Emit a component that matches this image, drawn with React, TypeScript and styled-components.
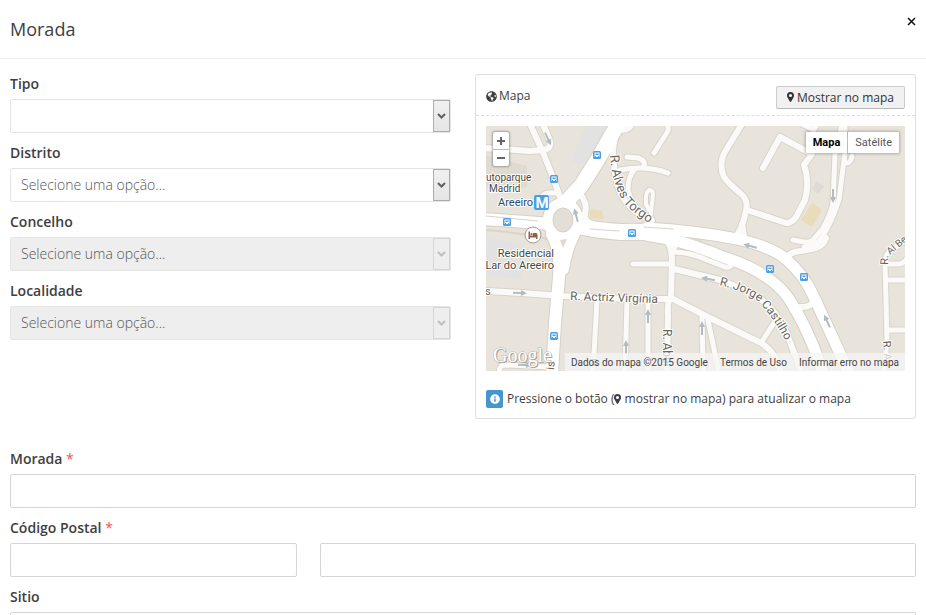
import React from "react";
import styled, { createGlobalStyle } from "styled-components";
import { FaInfoCircle, FaGlobeAmericas } from "react-icons/fa";

const GlobalStyle = createGlobalStyle`
  * { box-sizing: border-box; }
  body { margin: 0; background: #fff; color: #3e3e3e; font: 14px/20px "Open Sans", sans-serif; }
  input, select, button { font-family: inherit; }
`;

const Dialog = styled.main`
  height: 100vh;
  overflow-y: auto;
  scrollbar-width: none;
`;

const Header = styled.header`
  display: flex;
  justify-content: space-between;
  align-items: flex-start;
  padding: 14px 9px 14px 10px;
  border-bottom: 1px solid #eee;
`;

const Title = styled.h1`
  margin: 0;
  font-size: 18px;
  line-height: 30px;
  font-weight: 400;
`;

const CloseButton = styled.button`
  display: flex;
  margin: 2px 0 0;
  padding: 1px;
  border: 0;
  background: none;
  color: #111;
  cursor: pointer;
`;

const Form = styled.form`
  padding: 15px 10px 20px;
`;

const Columns = styled.div`
  display: grid;
  grid-template-columns: 1fr 1fr;
  align-items: start;
  gap: 24px;
  margin-bottom: 30px;
`;

const Field = styled.div`
  margin-bottom: 10px;
`;

const Label = styled.label`
  display: block;
  margin-bottom: 5px;
  font-weight: 600;
`;

const Required = styled.span`
  color: #f0524f;
  font-weight: 400;
`;

const TextBox = styled.input`
  display: block;
  width: 100%;
  height: 34px;
  padding: 0 10px;
  border: 1px solid #d5d5d5;
  border-radius: 2px;
  font-size: 14px;
  color: #555;
`;

const PostalRow = styled.div`
  display: grid;
  grid-template-columns: 13fr 27fr;
  gap: 23px;
`;

const SelectWrap = styled.div`
  position: relative;
`;

const Select = styled.select`
  display: block;
  width: 100%;
  height: 34px;
  padding: 0 28px 2px 10px;
  border: 1px solid #e5e5e5;
  border-radius: 2px;
  appearance: none;
  background: #fff;
  color: #555;
  font-size: 14px;
  font-weight: 300;
  opacity: 1;
  &:disabled { background: #eee; }
`;

const Arrow = styled.span<{ $disabled?: boolean }>`
  position: absolute;
  top: 1px;
  right: 1px;
  bottom: 1px;
  width: 17px;
  display: flex;
  align-items: center;
  justify-content: center;
  pointer-events: none;
  border: 1px solid ${(p) => (p.$disabled ? "#d6d6d6" : "#acacac")};
  background: ${(p) => (p.$disabled ? "#eee" : "linear-gradient(#f0f0f0, #e5e5e5)")};
  color: ${(p) => (p.$disabled ? "#bfbfbf" : "#606060")};
`;

const Panel = styled.section`
  border: 1px solid #ddd;
  border-radius: 3px;
  font-size: 12px;
`;

const PanelHeader = styled.div`
  display: flex;
  align-items: center;
  justify-content: space-between;
  height: 41px;
  padding: 4px 10px 0;
  border-bottom: 1px dashed #ddd;
`;

const PanelTitle = styled.h2`
  display: flex;
  align-items: center;
  gap: 2px;
  margin: 0 0 2px;
  font-size: 12px;
  font-weight: 400;
`;

const ShowButton = styled.button`
  display: flex;
  align-items: center;
  gap: 3px;
  height: 23px;
  padding: 0 10px;
  border: 1px solid #ccc;
  border-bottom-color: #b8b8b8;
  border-radius: 2px;
  background: #f1f1f1;
  color: #333;
  font-size: 12px;
`;

const MapBox = styled.div`
  position: relative;
  height: 245px;
  margin: 10px;
  overflow: hidden;
  background: #e8e4dc;
  font-family: Roboto, sans-serif;
`;

const MapArt = styled.svg`
  display: block;
  width: 100%;
  height: 100%;
`;

const ZoomControl = styled.div`
  position: absolute;
  top: 6px;
  left: 7px;
  display: flex;
  flex-direction: column;
  width: 16px;
  background: #fff;
  border-radius: 2px;
  box-shadow: 0 0 2px 1px rgba(0, 0, 0, 0.3);
`;

const ZoomButton = styled.button`
  display: flex;
  align-items: center;
  justify-content: center;
  height: 17px;
  padding: 0;
  border: 0;
  background: none;
  color: #666;
  & + & { border-top: 1px solid #bbb; }
`;

const TypeControl = styled.div`
  position: absolute;
  top: 6px;
  right: 6px;
  display: flex;
  background: #fff;
  border-radius: 1px;
  box-shadow: 0 0 3px 1px rgba(0, 0, 0, 0.25);
`;

const TypeButton = styled.button<{ $active?: boolean }>`
  height: 21px;
  padding: 0 7px;
  border: 0;
  background: none;
  color: ${(p) => (p.$active ? "#000" : "#565656")};
  font-size: 11px;
  font-weight: ${(p) => (p.$active ? 700 : 400)};
  & + & { border-left: 1px solid #bbb; }
`;

const Attribution = styled.div`
  position: absolute;
  right: 0;
  bottom: 0;
  display: flex;
  gap: 12px;
  height: 18px;
  padding: 1px 6px 0;
  background: rgba(245, 245, 245, 0.75);
  color: #444;
  font-size: 10px;
  line-height: 18px;
  white-space: nowrap;
`;

const TermsLink = styled.a`
  color: inherit;
  text-decoration: none;
`;

const Hint = styled.p`
  display: flex;
  align-items: center;
  gap: 4px;
  margin: 19px 10px 10px;
  line-height: 18px;
`;

const HintIcon = styled.span`
  display: flex;
  align-items: center;
  justify-content: center;
  width: 17px;
  height: 18px;
  border-radius: 2px;
  background: #4596cc;
  color: #fff;
`;

const PinIcon = styled.svg`
  width: 7px;
  height: 10px;
  fill: currentColor;
  vertical-align: -1px;
`;

function Pin() {
  return (
    <PinIcon viewBox="0 0 7 10" aria-hidden="true">
      <path fillRule="evenodd" d="M3.500 0A3.500 3.500 0 0 1 7 3.500Q7 4.500 6.600 5.200L4.200 9.600Q3.500 10.300 2.800 9.600L0.400 5.200Q0 4.500 0 3.500A3.500 3.500 0 0 1 3.500 0ZM3.500 1.900A1.600 1.600 0 1 0 3.500 5.100A1.600 1.600 0 1 0 3.500 1.900Z" />
    </PinIcon>
  );
}

type Road = { d: string; w: number };

const streets: Road[] = [
  { d: "M44 -2L56 24L68 54L75 74", w: 6 },
  { d: "M-2 22L44 25L58 24Q66 22 64 15L57 -2", w: 6 },
  { d: "M56 70Q60 66 70 67", w: 5 },
  { d: "M94 68Q102 77 99 88Q97 95 107 98", w: 6 },
  { d: "M146 -2Q142 6 130 3M129 10L127 24Q128 61 140 76Q150 89 166 94", w: 6 },
  { d: "M181 -2Q184 4 180 8L168 27", w: 5 },
  { d: "M141 31L152 32Q160 34 158 41M134 44Q160 39 182 47M149 43Q142 50 142 64Q145 77 152 83", w: 5 },
  { d: "M164 97L167 68Q167 64 163 64Q159 67 160 78L163 84", w: 4 },
  { d: "M256 -2L240 24Q232 37 238 51Q242 57 254 67Q263 74 260 85L256 100L249 113M256 98L259 115", w: 6 },
  { d: "M261 84L300 97Q306 97 310 91L319 74Q324 55 318 39L326 28L294 11L277 42", w: 6 },
  { d: "M316 -2L328 4L331 -2", w: 5 },
  { d: "M356 -2L349 28L347 77Q345 87 337 102L327 114Q324 118 307 114", w: 5 },
  { d: "M359 -2L359 26L353 74Q345 98 336 111Q332 119 318 121", w: 5 },
  { d: "M366 30Q365 38 359 37", w: 5 },
  { d: "M299 134Q302 126 315 125L330 122Q338 119 340 112", w: 6 },
  { d: "M314 181Q325 182 328 174", w: 6 },
  { d: "M-2 165L36 167L76 170L144 173L184 173", w: 6 },
  { d: "M111 173L107 247M141 174L139 247M162 174L162 247", w: 5 },
  { d: "M147 138L186 138", w: 5 },
  { d: "M178 112Q186 118 186 135L185 171Q181 175 182 190L181 247M196 114Q187 118 186 128", w: 6 },
  { d: "M188 126Q204 126 221 134L239 141Q245 142 248 136", w: 5 },
  { d: "M188 143L234 154L262 165Q288 178 301 208L316 247", w: 6 },
  { d: "M185 172L224 192L275 217Q290 226 295 247", w: 6 },
  { d: "M216 190L217 247M222 194L233 247M275 217L291 192", w: 5 },
  { d: "M14 247Q12 239 20 239L64 241", w: 5 },
  { d: "M425 110L402 127Q399 130 399 137L401 214L398 247M399 138L413 138Q419 137 421 132M401 154L422 154M401 204L422 204", w: 5 },
];

const avenues: Road[] = [
  { d: "M133 -4L112 33L95 60L80 76", w: 15 },
  { d: "M-2 93L40 96L66 98", w: 12 },
  { d: "M85 97Q95 103 135 106Q165 105 187 109", w: 16 },
  { d: "M160 102Q210 105 251 113Q287 121 301 134Q318 149 327 169L364 249", w: 11 },
  { d: "M160 109Q205 116 234 130Q281 144 301 170Q321 199 338 249", w: 11 },
  { d: "M66 108Q75 125 73 151L69 197L66 248M88 108Q80 123 77 143", w: 12 },
];

const buses = [[111, 29], [68, 53], [21, 96], [146, 107], [284, 143], [318, 151], [68, 210]];

const arrows = [
  [62, 13, 155], [90, 89, -15], [347, 70, 180], [264, 120, -75], [222, 153, -80],
  [341, 195, -25], [34, 167, 93], [162, 190, 0], [216, 202, 0], [140, 221, 0], [39, 239, 92],
];

function CityMap() {
  return (
    <MapArt viewBox="0 0 419 245" preserveAspectRatio="xMidYMid slice" role="img" aria-label="Mapa">
      <rect width="419" height="245" fill="#e8e4dc" />
      <path d="M100 0H122L98 39L85 35Z M0 112L36 118V153L0 149Z" fill="#e2e2e3" />
      <path d="M0 29L41 40V60L24 68L0 61Z" fill="#dfdbd3" />
      <path d="M330 55L338 60L332 68L326 63Z" fill="#dedad5" />
      <path d="M326 77L336 84L326 101L315 94Z M104 83L116 85L118 93L104 92Z" fill="#e8dcb9" />
      <g fill="none" strokeLinecap="round" strokeLinejoin="round">
        <path d="M0 104Q38 107 61 113" stroke="#d9d5cb" strokeWidth="2" />
        {streets.map((r) => <path key={r.d} d={r.d} stroke="#d8d4ca" strokeWidth={r.w + 2} />)}
        {avenues.map((r) => <path key={r.d} d={r.d} stroke="#d5d1c6" strokeWidth={r.w + 2} />)}
        <ellipse cx="77" cy="94" rx="15" ry="17" stroke="#d5d1c6" strokeWidth="12" />
        {streets.map((r) => <path key={r.d} d={r.d} stroke="#fbfaf8" strokeWidth={r.w} />)}
        {avenues.map((r) => <path key={r.d} d={r.d} stroke="#fff" strokeWidth={r.w} />)}
        <ellipse cx="77" cy="94" rx="15" ry="17" stroke="#fff" strokeWidth="10" />
        <path d="M0 90L52 95M158 101L187 103M104 103L133 105" stroke="#d8d4ca" strokeWidth="1" />
      </g>
      <ellipse cx="77" cy="94" rx="10" ry="12" fill="#e3dfd7" stroke="#d5d1c6" />
      <path d="M74 114L81 113L77 122Z M202 112L213 113L226 121Z" fill="#ddd9d0" />

      {arrows.map(([x, y, a]) => (
        <path key={`${x}-${y}`} transform={`translate(${x} ${y}) rotate(${a})`} d="M0 -7L-3 -1H-1V7H1V-1H3Z" fill="#b3bbc2" />
      ))}
      {buses.map(([x, y]) => (
        <g key={`${x}-${y}`} transform={`translate(${x} ${y})`}>
          <rect x="-4" y="-4" width="8" height="8" rx="1.5" fill="#4a9fe8" />
          <path d="M-2.5 -2.5H2.5V2H-2.5Z" fill="#fff" />
          <path d="M-1.5 -1.5H1.5V0H-1.5Z M-2 1H-1V2H-2Z M1 1H2V2H1Z" fill="#4a9fe8" />
        </g>
      ))}

      <rect x="48" y="69" width="15" height="15" rx="2" fill="#4a9fe8" />
      <text x="56" y="82" textAnchor="middle" fontFamily="Roboto, sans-serif" fontSize="15" fontWeight="700" fill="#fff">M</text>
      <circle cx="47" cy="109" r="8" fill="#fff" stroke="#a5998f" strokeWidth="1" />
      <path d="M42.5 105.5H44V109.5H47V107H50Q51.5 107 51.5 109V113H50V111.5H44V113H42.5Z" fill="#8d6242" />
      <circle cx="45.5" cy="108" r="1.1" fill="#8d6242" />

      <g fontFamily="Roboto, sans-serif" fontSize="11" fill="#4b4640" stroke="#fff" strokeWidth="2" strokeLinejoin="round" paintOrder="stroke">
        <text x="0" y="55" fontSize="10">utoparque</text>
        <text x="3" y="66" fontSize="10">Madrid</text>
        <text x="12" y="80" fill="#214a7a">Areeiro</text>
        <text x="68" y="131" textAnchor="end">Residencial</text>
        <text x="68" y="143" textAnchor="end">Lar do Areeiro</text>
      </g>
      <defs>
        <path id="alves" d="M124 29Q126 60 139 78Q147 87 172 103" />
        <path id="castilho" d="M233 159Q261 166 272 175Q288 191 307 229" />
      </defs>
      <g fontFamily="Roboto, sans-serif" fontSize="12" fill="#69645c" stroke="#fff" strokeWidth="2" strokeLinejoin="round" paintOrder="stroke">
        <text fontSize="13"><textPath href="#alves">R. Alves Torgo</textPath></text>
        <text><textPath href="#castilho">R. Jorge Castilho</textPath></text>
        <text x="84" y="174" transform="rotate(2 84 174)">R. Actriz Virgínia</text>
        <text x="-1" y="169" fontSize="11">s</text>
        <text transform="translate(177 203) rotate(90)" fontSize="12">R. Abel</text>
        <text transform="translate(397 215) rotate(86)" fontSize="11">R. Al</text>
        <text transform="translate(402 139) rotate(-88)" fontSize="11">R.</text>
        <text transform="translate(404 129) rotate(-40)" fontSize="10">Al Be</text>
        <text transform="translate(68 244) rotate(-86)" fontSize="11">is</text>
        <text transform="translate(111 240) rotate(-88)" fontSize="10">el</text>
      </g>
      <g fontFamily="'Liberation Serif', serif" fontSize="20">
        <text x="8" y="237" fill="#98948d">Google</text>
        <text x="7" y="236" fill="#fff" stroke="#bab6ae" strokeWidth="1" paintOrder="stroke">Google</text>
      </g>
    </MapArt>
  );
}

type SelectFieldProps = { id: string; label: string; placeholder?: string; disabled?: boolean };

function SelectField({ id, label, placeholder = "", disabled }: SelectFieldProps) {
  return (
    <Field>
      <Label htmlFor={id}>{label}</Label>
      <SelectWrap>
        <Select id={id} disabled={disabled}>
          <option>{placeholder}</option>
        </Select>
        <Arrow $disabled={disabled}>
          <svg width="9" height="7" viewBox="0 0 9 7" fill="none" stroke="currentColor" strokeWidth="2">
            <path d="M1 1L4.500 4.500L8 1" />
          </svg>
        </Arrow>
      </SelectWrap>
    </Field>
  );
}

export default function App() {
  return (
    <>
      <GlobalStyle />
      <Dialog>
        <Header>
          <Title>Morada</Title>
          <CloseButton type="button" aria-label="Fechar">
            <svg width="9" height="9" viewBox="0 0 9 9" stroke="currentColor" strokeWidth="1.500">
              <path d="M1 1L8 8M8 1L1 8" />
            </svg>
          </CloseButton>
        </Header>
        <Form>
          <Columns>
            <div>
              <SelectField id="tipo" label="Tipo" />
              <SelectField id="distrito" label="Distrito" placeholder="Selecione uma opção..." />
              <SelectField id="concelho" label="Concelho" placeholder="Selecione uma opção..." disabled />
              <SelectField id="localidade" label="Localidade" placeholder="Selecione uma opção..." disabled />
            </div>
            <Panel>
              <PanelHeader>
                <PanelTitle><FaGlobeAmericas size={11} />Mapa</PanelTitle>
                <ShowButton type="button"><Pin />Mostrar no mapa</ShowButton>
              </PanelHeader>
              <MapBox>
                <CityMap />
                <ZoomControl>
                  <ZoomButton type="button" aria-label="Aumentar">
                    <svg width="8" height="8" viewBox="0 0 8 8" fill="currentColor"><path d="M3 0H5V3H8V5H5V8H3V5H0V3H3Z" /></svg>
                  </ZoomButton>
                  <ZoomButton type="button" aria-label="Diminuir">
                    <svg width="8" height="2" viewBox="0 0 8 2" fill="currentColor"><path d="M0 0H8V2H0Z" /></svg>
                  </ZoomButton>
                </ZoomControl>
                <TypeControl>
                  <TypeButton type="button" $active>Mapa</TypeButton>
                  <TypeButton type="button">Satélite</TypeButton>
                </TypeControl>
                <Attribution>
                  <span>Dados do mapa ©2015 Google</span>
                  <TermsLink href="#termos">Termos de Uso</TermsLink>
                  <TermsLink href="#erro">Informar erro no mapa</TermsLink>
                </Attribution>
              </MapBox>
              <Hint>
                <HintIcon><FaInfoCircle size={10} /></HintIcon>
                <span>Pressione o botão (<Pin /> mostrar no mapa) para atualizar o mapa</span>
              </Hint>
            </Panel>
          </Columns>
          <Field>
            <Label htmlFor="morada">Morada <Required>*</Required></Label>
            <TextBox id="morada" type="text" required />
          </Field>
          <Field>
            <Label htmlFor="codigo">Código Postal <Required>*</Required></Label>
            <PostalRow>
              <TextBox id="codigo" type="text" required />
              <TextBox type="text" aria-label="Localidade postal" />
            </PostalRow>
          </Field>
          <Field>
            <Label htmlFor="sitio">Sitio</Label>
            <TextBox id="sitio" type="text" />
          </Field>
        </Form>
      </Dialog>
    </>
  );
}
